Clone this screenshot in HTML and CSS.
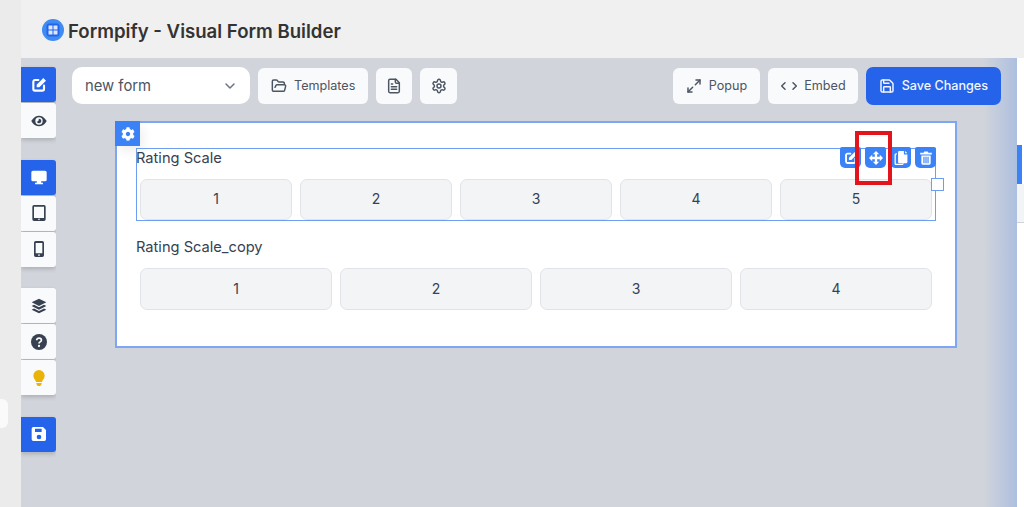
FILE: index.html
```html
<!DOCTYPE html>
<html lang="en">
<head>
<meta charset="utf-8">
<title>Formpify - Visual Form Builder</title>
<link rel="stylesheet" href="styles.css">
</head>
<body>
<svg class="sprite" xmlns="http://www.w3.org/2000/svg">
  <symbol id="i-edit" viewBox="0 0 24 24"><path d="M11 4.500H6A2.500 2.500 0 0 0 3.500 7v11A2.500 2.500 0 0 0 6 20.500h11a2.500 2.500 0 0 0 2.500-2.500v-5" fill="none" stroke="currentColor" stroke-width="3.200" stroke-linecap="round"/><path d="M8.500 15.500v-4L18.500 1.500l4 4-10 10z" fill="currentColor"/></symbol>
  <symbol id="i-eye" viewBox="0 0 24 24"><path fill="currentColor" fill-rule="evenodd" d="M.5 12S4.500 4 12 4s11.500 8 11.500 8-4 8-11.500 8S.5 12 .5 12zM12 6.500a5.500 5.500 0 1 0 0 11 5.500 5.500 0 0 0 0-11zM12 8.500a3.500 3.500 0 1 1-3.400 4.300c1.500.6 3.600-1.500 3-4.300z"/></symbol>
  <symbol id="i-desktop" viewBox="0 0 24 24"><path fill="currentColor" d="M3 2.500h18A2.500 2.500 0 0 1 23.500 5v11a2.500 2.500 0 0 1-2.500 2.500h-6l.6 2.200H18V23H6v-2.300h2.400l.6-2.200H3A2.500 2.500 0 0 1 .5 16V5A2.500 2.500 0 0 1 3 2.500z"/></symbol>
  <symbol id="i-tablet" viewBox="0 0 24 24"><path fill="currentColor" fill-rule="evenodd" d="M4.500 0h15A2.500 2.500 0 0 1 22 2.500v19a2.500 2.500 0 0 1-2.500 2.500h-15A2.500 2.500 0 0 1 2 21.500v-19A2.500 2.500 0 0 1 4.500 0zM4.500 2.500v17h15v-17zM12 20.300a1.200 1.200 0 1 0 0 2.400 1.200 1.200 0 0 0 0-2.400z"/></symbol>
  <symbol id="i-mobile" viewBox="0 0 24 24"><path fill="currentColor" fill-rule="evenodd" d="M7 0h10a2.500 2.500 0 0 1 2.500 2.500v19A2.500 2.500 0 0 1 17 24H7a2.500 2.500 0 0 1-2.500-2.500v-19A2.500 2.500 0 0 1 7 0zM7 3v15.500h10V3zM12 19.800a1.300 1.300 0 1 0 0 2.600 1.300 1.300 0 0 0 0-2.600z"/></symbol>
  <symbol id="i-layers" viewBox="0 0 24 24"><path fill="currentColor" d="M12 1l11 5.500L12 12 1 6.500z"/><path fill="currentColor" d="M4.500 10.300L12 14l7.500-3.700 3.500 1.700-11 5.500L1 12z"/><path fill="currentColor" d="M4.500 15.800L12 19.500l7.500-3.700 3.500 1.700L12 23 1 17.500z"/></symbol>
  <symbol id="i-help" viewBox="0 0 24 24"><circle cx="12" cy="12" r="12" fill="currentColor"/><path d="M8.500 9.500c0-2 1.600-3.200 3.600-3.200s3.500 1.100 3.500 3c0 2.600-3.600 2.500-3.600 5" fill="none" stroke="#f9fafb" stroke-width="2.600"/><circle cx="12" cy="18" r="1.700" fill="#f9fafb"/></symbol>
  <symbol id="i-bulb" viewBox="0 0 24 24"><path fill="currentColor" d="M12 0a8.500 8.500 0 0 0-8.500 8.500c0 4 3 5.500 4 9.500h9c1-4 4-5.500 4-9.500A8.500 8.500 0 0 0 12 0zM8 19.500h8V21l-2 3h-4l-2-3z"/></symbol>
  <symbol id="i-floppy" viewBox="0 0 24 24"><path fill="currentColor" fill-rule="evenodd" d="M3.500 1.500h14.500l4.500 4.500v14a2.500 2.500 0 0 1-2.500 2.500H3.500A2.500 2.500 0 0 1 1 20V4a2.500 2.500 0 0 1 2.500-2.500zM6 4v5h10V4zM12 13a3.500 3.500 0 1 0 0 7 3.500 3.500 0 0 0 0-7z"/></symbol>
  <symbol id="i-cog" viewBox="0 0 512 512"><path fill="currentColor" d="M487.4 315.700l-42.600-24.600c4.300-23.200 4.300-47 0-70.200l42.600-24.600c4.900-2.800 7.100-8.600 5.500-14-11.100-35.600-30-67.800-54.700-94.600-3.800-4.100-10-5.100-14.800-2.300L380.800 110c-17.900-15.400-38.500-27.300-60.800-35.100V25.800c0-5.600-3.900-10.500-9.400-11.700-36.700-8.200-74.300-7.800-109.200 0-5.500 1.200-9.400 6.100-9.400 11.700V75c-22.200 7.900-42.800 19.800-60.800 35.100L88.700 85.500c-4.900-2.800-11-1.900-14.800 2.300-24.700 26.700-43.600 58.900-54.700 94.600-1.700 5.400.6 11.200 5.500 14L67.300 221c-4.300 23.200-4.300 47 0 70.200l-42.600 24.600c-4.900 2.800-7.100 8.600-5.500 14 11.100 35.600 30 67.800 54.700 94.600 3.800 4.100 10 5.100 14.800 2.300l42.600-24.600c17.900 15.400 38.500 27.300 60.800 35.100v49.200c0 5.600 3.900 10.500 9.400 11.700 36.700 8.200 74.300 7.800 109.200 0 5.500-1.200 9.400-6.100 9.400-11.700v-49.200c22.200-7.900 42.800-19.800 60.800-35.100l42.600 24.600c4.900 2.800 11 1.900 14.800-2.300 24.700-26.700 43.600-58.900 54.700-94.600 1.500-5.500-.7-11.300-5.600-14.100zM256 336c-44.100 0-80-35.900-80-80s35.900-80 80-80 80 35.900 80 80-35.900 80-80 80z"/></symbol>
  <symbol id="i-move" viewBox="0 0 24 24"><path fill="currentColor" d="M12 0l5.500 5.500h-3.500v4.500h4.500V6.500L24 12l-5.500 5.500V14H14v4.500h3.500L12 24l-5.500-5.500H10V14H5.500v3.500L0 12l5.500-5.500V10H10V5.500H6.500z"/></symbol>
  <symbol id="i-copy" viewBox="0 0 24 24"><path fill="currentColor" d="M9 0h8v6h6v13a2 2 0 0 1-2 2H9a2 2 0 0 1-2-2V2a2 2 0 0 1 2-2zM19 0l4 4h-4z"/><path d="M5 5H3.500A1.500 1.500 0 0 0 2 6.500v15A1.500 1.500 0 0 0 3.500 23H14a1.500 1.500 0 0 0 1.500-1.500V21" fill="none" stroke="currentColor" stroke-width="2.200"/></symbol>
  <symbol id="i-trash" viewBox="0 0 24 24"><path fill="currentColor" fill-rule="evenodd" d="M2 3h6l1-2h6l1 2h6v3H2zM4 7.500h16V21a2.500 2.500 0 0 1-2.500 2.500h-11A2.500 2.500 0 0 1 4 21zM7.500 10v11h2V10zM11 10v11h2V10zM14.500 10v11h2V10z"/></symbol>
  <symbol id="i-folder" viewBox="0 0 24 24"><path d="m6 14 1.500-2.900A2 2 0 0 1 9.240 10H20a2 2 0 0 1 1.940 2.500l-1.540 6a2 2 0 0 1-1.950 1.500H4a2 2 0 0 1-2-2V5a2 2 0 0 1 2-2h3.900a2 2 0 0 1 1.690.9l.81 1.200a2 2 0 0 0 1.670.9H18a2 2 0 0 1 2 2v2"/></symbol>
  <symbol id="i-file" viewBox="0 0 24 24"><path d="M15 2H6a2 2 0 0 0-2 2v16a2 2 0 0 0 2 2h12a2 2 0 0 0 2-2V7Z"/><path d="M14 2v4a2 2 0 0 0 2 2h4"/><path d="M10 9H8"/><path d="M16 13H8"/><path d="M16 17H8"/></symbol>
  <symbol id="i-settings" viewBox="0 0 24 24"><path d="M12.220 2h-.44a2 2 0 0 0-2 2v.18a2 2 0 0 1-1 1.730l-.43.25a2 2 0 0 1-2 0l-.15-.08a2 2 0 0 0-2.730.73l-.22.38a2 2 0 0 0 .73 2.730l.15.1a2 2 0 0 1 1 1.720v.51a2 2 0 0 1-1 1.740l-.15.09a2 2 0 0 0-.73 2.730l.22.38a2 2 0 0 0 2.730.73l.15-.08a2 2 0 0 1 2 0l.43.25a2 2 0 0 1 1 1.730V20a2 2 0 0 0 2 2h.44a2 2 0 0 0 2-2v-.18a2 2 0 0 1 1-1.730l.43-.25a2 2 0 0 1 2 0l.15.08a2 2 0 0 0 2.730-.73l.22-.39a2 2 0 0 0-.73-2.730l-.15-.08a2 2 0 0 1-1-1.740v-.5a2 2 0 0 1 1-1.740l.15-.09a2 2 0 0 0 .73-2.730l-.22-.38a2 2 0 0 0-2.730-.73l-.15.08a2 2 0 0 1-2 0l-.43-.25a2 2 0 0 1-1-1.730V4a2 2 0 0 0-2-2z"/><circle cx="12" cy="12" r="3"/></symbol>
  <symbol id="i-expand" viewBox="0 0 24 24"><path d="M15 3h6v6"/><path d="M9 21H3v-6"/><path d="M21 3l-7 7"/><path d="M3 21l7-7"/></symbol>
  <symbol id="i-code" viewBox="0 0 24 24"><path d="m18 17 5-5-5-5"/><path d="m6 7-5 5 5 5"/></symbol>
  <symbol id="i-save" viewBox="0 0 24 24"><path d="M15.200 3a2 2 0 0 1 1.400.6l3.800 3.800a2 2 0 0 1 .6 1.400V19a2 2 0 0 1-2 2H5a2 2 0 0 1-2-2V5a2 2 0 0 1 2-2z"/><path d="M17 21v-7a1 1 0 0 0-1-1H8a1 1 0 0 0-1 1v7"/><path d="M7 3v4a1 1 0 0 0 1 1h7"/></symbol>
  <symbol id="i-chevron" viewBox="0 0 24 24"><path d="m6 9 6 6 6-6"/></symbol>
</svg>

<div class="app">
  <div class="strip"><span class="strip-pill"></span></div>
  <div class="main">
    <header class="topbar">
      <svg class="logo" viewBox="0 0 22 22">
        <circle cx="11" cy="11" r="11" fill="#3f8cf3"/>
        <rect x="4.500" y="4.500" width="13" height="13" rx="3" fill="#2563eb"/>
        <path fill="#dbe7fd" d="M6.500 6.500h4v4h-4zM11.500 6.500h4v4h-4zM6.500 11.500h4v4h-4zM11.500 11.500h4v4h-4z"/>
      </svg>
      <h1 class="title">Formpify - Visual Form Builder</h1>
    </header>

    <div class="workspace">
      <nav class="rail">
        <div class="rail-group">
          <button class="rail-btn rail-btn--on"><svg class="rail-icon"><use href="#i-edit"/></svg></button>
          <button class="rail-btn"><svg class="rail-icon"><use href="#i-eye"/></svg></button>
        </div>
        <div class="rail-group">
          <button class="rail-btn rail-btn--on"><svg class="rail-icon"><use href="#i-desktop"/></svg></button>
          <button class="rail-btn"><svg class="rail-icon"><use href="#i-tablet"/></svg></button>
          <button class="rail-btn"><svg class="rail-icon"><use href="#i-mobile"/></svg></button>
        </div>
        <div class="rail-group">
          <button class="rail-btn"><svg class="rail-icon"><use href="#i-layers"/></svg></button>
          <button class="rail-btn"><svg class="rail-icon"><use href="#i-help"/></svg></button>
          <button class="rail-btn rail-btn--bulb"><svg class="rail-icon"><use href="#i-bulb"/></svg></button>
        </div>
        <div class="rail-group">
          <button class="rail-btn rail-btn--on"><svg class="rail-icon"><use href="#i-floppy"/></svg></button>
        </div>
      </nav>

      <main class="stage">
        <div class="toolbar">
          <div class="select">new form<svg class="line-icon select-arrow"><use href="#i-chevron"/></svg></div>
          <button class="tool"><svg class="line-icon"><use href="#i-folder"/></svg>Templates</button>
          <button class="tool tool--square"><svg class="line-icon"><use href="#i-file"/></svg></button>
          <button class="tool tool--square"><svg class="line-icon"><use href="#i-settings"/></svg></button>
          <button class="tool tool--push"><svg class="line-icon"><use href="#i-expand"/></svg>Popup</button>
          <button class="tool tool--embed"><svg class="line-icon"><use href="#i-code"/></svg>Embed</button>
          <button class="tool tool--save"><svg class="line-icon"><use href="#i-save"/></svg>Save Changes</button>
        </div>

        <section class="canvas">
          <span class="canvas-gear"><svg class="small-icon"><use href="#i-cog"/></svg></span>

          <div class="field field--active">
            <div class="field-label">Rating Scale</div>
            <div class="scale">
              <button class="scale-btn">1</button>
              <button class="scale-btn">2</button>
              <button class="scale-btn">3</button>
              <button class="scale-btn">4</button>
              <button class="scale-btn">5</button>
            </div>
            <div class="field-actions">
              <span class="action"><svg class="small-icon"><use href="#i-edit"/></svg></span>
              <span class="action"><svg class="small-icon"><use href="#i-move"/></svg></span>
              <span class="action"><svg class="small-icon"><use href="#i-copy"/></svg></span>
              <span class="action"><svg class="small-icon"><use href="#i-trash"/></svg></span>
            </div>
            <span class="resize-handle"></span>
            <span class="callout"></span>
          </div>

          <div class="field">
            <div class="field-label">Rating Scale_copy</div>
            <div class="scale">
              <button class="scale-btn">1</button>
              <button class="scale-btn">2</button>
              <button class="scale-btn">3</button>
              <button class="scale-btn">4</button>
            </div>
          </div>
        </section>
      </main>

      <aside class="panel">
        <div class="panel-tab"></div>
        <div class="panel-row"></div>
      </aside>
    </div>
  </div>
</div>
</body>
</html>
```

FILE: styles.css
```css
* { box-sizing: border-box; }
html, body { height: 100%; margin: 0; }
body { font-family: Inter, "Noto Sans", sans-serif; color: #374151; overflow: hidden; }
button { font: inherit; color: inherit; padding: 0; margin: 0; border: 0; background: none; }
.sprite { display: none; }

.app { display: flex; height: 507px; }
.strip { width: 21px; background: #ebebeb; position: relative; flex: none; }
.strip-pill { position: absolute; left: 0; top: 399px; width: 8px; height: 29px; background: #fafafa; border-radius: 0 6px 6px 0; }
.main { flex: 1; display: flex; flex-direction: column; min-width: 0; }

.topbar { height: 58px; background: #f0f0f0; display: flex; align-items: center; gap: 4px; padding: 2px 0 0 21px; flex: none; }
.logo { width: 22px; height: 22px; flex: none; }
.title { margin: 2px 0 0; font-size: 18.6px; font-weight: 600; color: #333; }

.workspace { flex: 1; display: flex; min-height: 0; }

.rail { width: 35px; flex: none; display: flex; flex-direction: column; gap: 21.5px; padding-top: 9px; background: #d1d5db; }
.rail-group { display: flex; flex-direction: column; gap: 1px; }
.rail-btn { width: 35px; height: 35px; display: flex; align-items: center; justify-content: center; background: #f9fafb; color: #374151; border-radius: 0 3px 3px 0; box-shadow: 0 2px 4px rgba(0, 0, 0, .18); }
.rail-btn--on { background: #2563eb; color: #fff; }
.rail-btn--bulb { color: #eab308; }
.rail-icon { width: 16px; height: 16px; }

.stage { flex: 1; min-width: 0; padding: 9px 16px 0; background: linear-gradient(to right, #d1d5db calc(100% - 34px), #adbfdf 100%); }
.toolbar { display: flex; align-items: center; gap: 8px; height: 37px; }
.select { width: 178px; height: 37px; display: flex; align-items: center; justify-content: space-between; padding: 0 12px 0 13px; background: #fff; border-radius: 10px; font-size: 14.8px; color: #4b5563; }
.tool { height: 36px; padding: 0 13px; display: flex; align-items: center; gap: 7px; background: #f9fafb; border-radius: 6px; font-size: 12.6px; color: #4b5563; }
.tool--square { width: 36px; justify-content: center; padding: 0; }
.tool--square + .tool--square { width: 37px; }
.tool--push { margin-left: auto; }
.tool--embed { padding-right: 12px; }
.tool--save { height: 38px; background: #2563eb; color: #f3f6fe; font-weight: 500; border-radius: 7px; }
.line-icon { width: 16px; height: 16px; fill: none; stroke: currentColor; stroke-width: 2.2; stroke-linecap: round; stroke-linejoin: round; flex: none; }
.select-arrow { color: #6b7280; }

.canvas { position: relative; height: 227px; margin: 17px 44px 0 43px; padding: 25px 19px 0; background: #fff; border: 2px solid #7da7f3; }
.canvas-gear { position: absolute; left: -2px; top: -2px; width: 25px; height: 25px; display: flex; align-items: center; justify-content: center; background: #3b82f6; color: #fff; box-shadow: 4px 6px 10px rgba(0, 0, 0, .06); }
.small-icon { width: 14px; height: 14px; }

.field { position: relative; border: 1px solid transparent; margin-bottom: 16px; }
.field--active { border-color: #6e9ef2; height: 73px; }
.field-label { font-size: 14.65px; line-height: 18px; margin-bottom: 12px; margin-left: -1px; color: #374151; }
.scale { display: flex; gap: 8px; padding: 0 3px; }
.scale-btn { flex: 1; height: 42px; padding-bottom: 2px; background: #f3f4f6; border: 1px solid #e1e3e8; border-radius: 7px; font-size: 14px; color: #374151; }
.field--active .scale-btn { height: 41px; }

.field-actions { position: absolute; right: -1px; top: -2px; display: flex; gap: 4px; }
.action { width: 21px; height: 21px; display: flex; align-items: center; justify-content: center; background: #3b82f6; color: #fff; border-radius: 2px 2px 5px 5px; }
.resize-handle { position: absolute; right: -9px; top: 29px; width: 13px; height: 13px; background: #fff; border: 1px solid #6e9ef2; }
.callout { position: absolute; right: 43px; top: -18px; width: 37px; height: 54px; border: 4px solid #e3141b; }

.panel { width: 7px; flex: none; margin-top: 9px; background: #fff; display: flex; flex-direction: column; padding-top: 78px; }
.panel-tab { height: 39px; background: #fff; border-left: 5px solid #3b82f6; }
.panel-row { height: 39px; background: #f3f4f6; border-bottom: 1px solid #d1d5db; }
```
